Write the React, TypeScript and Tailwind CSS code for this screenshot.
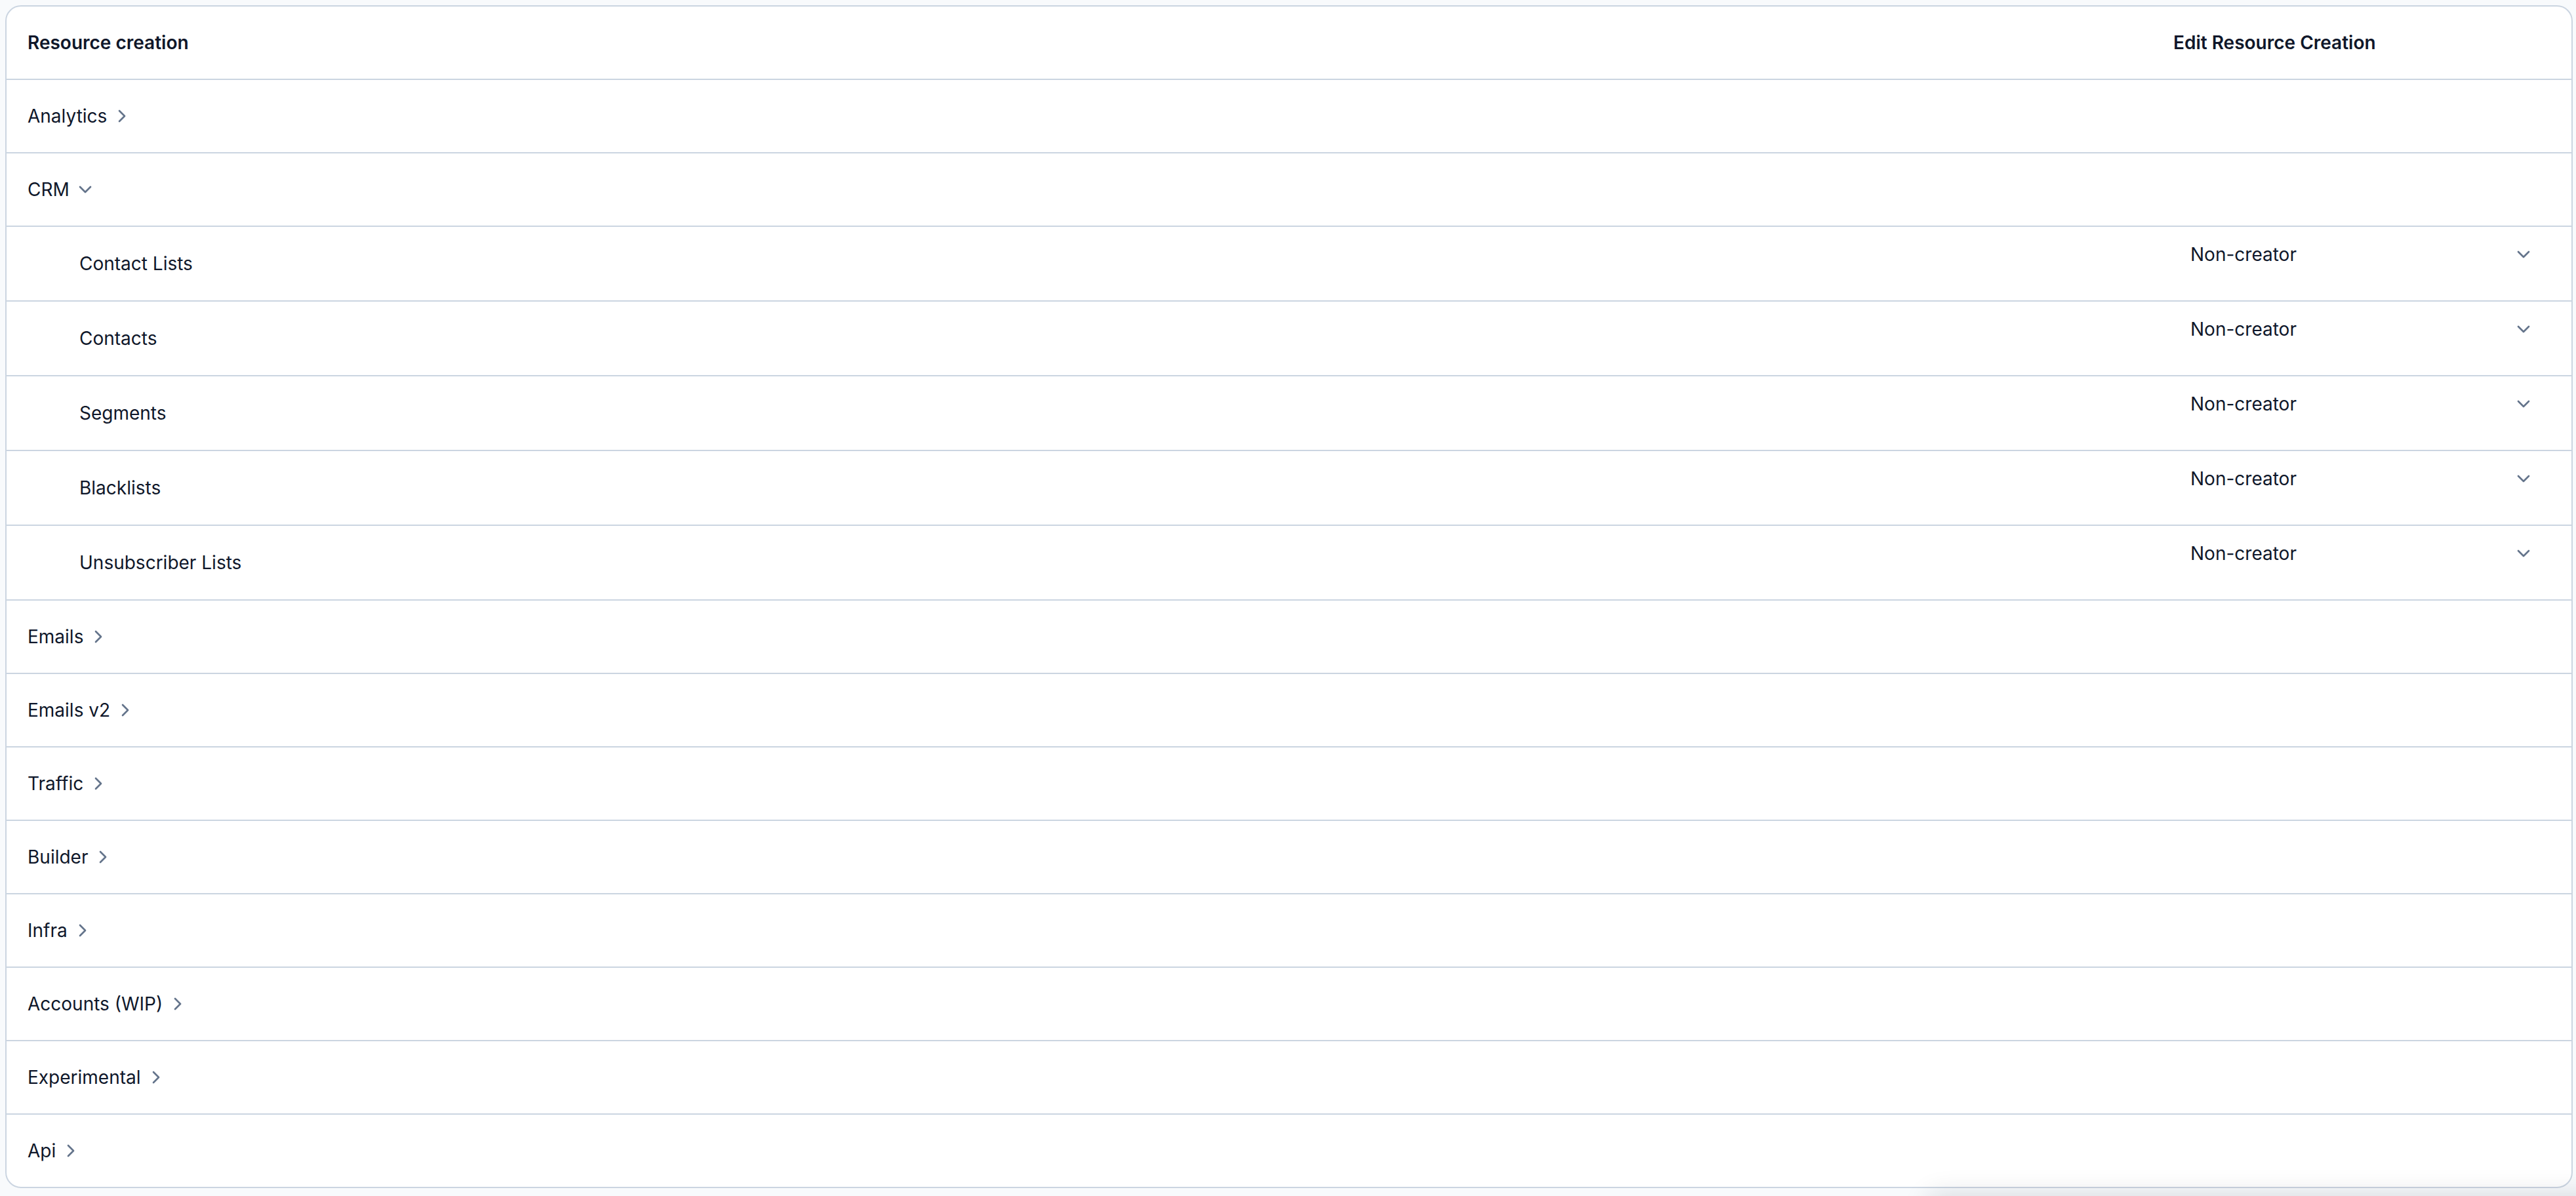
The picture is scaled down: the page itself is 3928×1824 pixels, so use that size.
import React from 'react'
import { ChevronRight, ChevronDown } from 'lucide-react'

interface Section {
  name: string
  open?: boolean
  children?: string[]
}

const sections: Section[] = [
  { name: 'Analytics' },
  {
    name: 'CRM',
    open: true,
    children: [
      'Contact Lists',
      'Contacts',
      'Segments',
      'Blacklists',
      'Unsubscriber Lists',
    ],
  },
  { name: 'Emails' },
  { name: 'Emails v2' },
  { name: 'Traffic' },
  { name: 'Builder' },
  { name: 'Infra' },
  { name: 'Accounts (WIP)' },
  { name: 'Experimental' },
  { name: 'Api' },
]

const RoleSelect = () => (
  <button
    type="button"
    className="flex h-[80px] w-[576px] items-center justify-between rounded-[12px] border-2 border-transparent bg-transparent px-[24px] text-[28px] text-[#0f172a]"
  >
    <span>Non-creator</span>
    <ChevronDown size={32} className="text-[#64748b]" />
  </button>
)

const App: React.FC = () => {
  return (
    <div
      className="relative min-h-[1824px] overflow-hidden bg-[#f8fafc] pl-[8px] pr-[5px] pt-[8px] pb-[12px]"
      style={{ fontFamily: 'Inter, "Noto Sans", sans-serif' }}
    >
      <div className="overflow-hidden rounded-[24px] border-2 border-[#cbd5e1] bg-white text-[#0f172a]">
        <div className="grid h-[112px] grid-cols-[1fr_639px] border-b-2 border-[#cbd5e1] text-[28px] font-semibold">
          <div className="flex items-center px-[32px]">Resource creation</div>
          <div className="flex items-center px-[32px]">Edit Resource Creation</div>
        </div>

        {sections.map((section, i) => {
          const last = i === sections.length - 1
          return (
            <React.Fragment key={section.name}>
              <div
                className={
                  last
                    ? 'flex h-[110px] items-center px-[32px] text-[28px]'
                    : 'flex h-[112px] items-center border-b-2 border-[#cbd5e1] px-[32px] text-[28px]'
                }
              >
                <span>{section.name}</span>
                {section.open ? (
                  <ChevronDown size={32} className="ml-[8px] text-[#64748b]" />
                ) : (
                  <ChevronRight size={32} className="ml-[7px] text-[#64748b]" />
                )}
              </div>
              {section.open &&
                section.children?.map((child) => (
                  <div
                    key={child}
                    className="grid h-[114px] grid-cols-[1fr_639px] border-b-2 border-[#cbd5e1] text-[28px]"
                  >
                    <div className="flex items-center pl-[111px]">{child}</div>
                    <div className="pl-[32px] pt-[2px]">
                      <RoleSelect />
                    </div>
                  </div>
                ))}
            </React.Fragment>
          )
        })}
      </div>

      {/* floating panel just below the fold, only its shadow shows */}
      <div className="pointer-events-none fixed left-[2940px] top-[1830px] h-[200px] w-[1100px] rounded-[16px] bg-white shadow-[0_-8px_40px_rgba(15,23,42,0.14)]" />
    </div>
  )
}

export default App
